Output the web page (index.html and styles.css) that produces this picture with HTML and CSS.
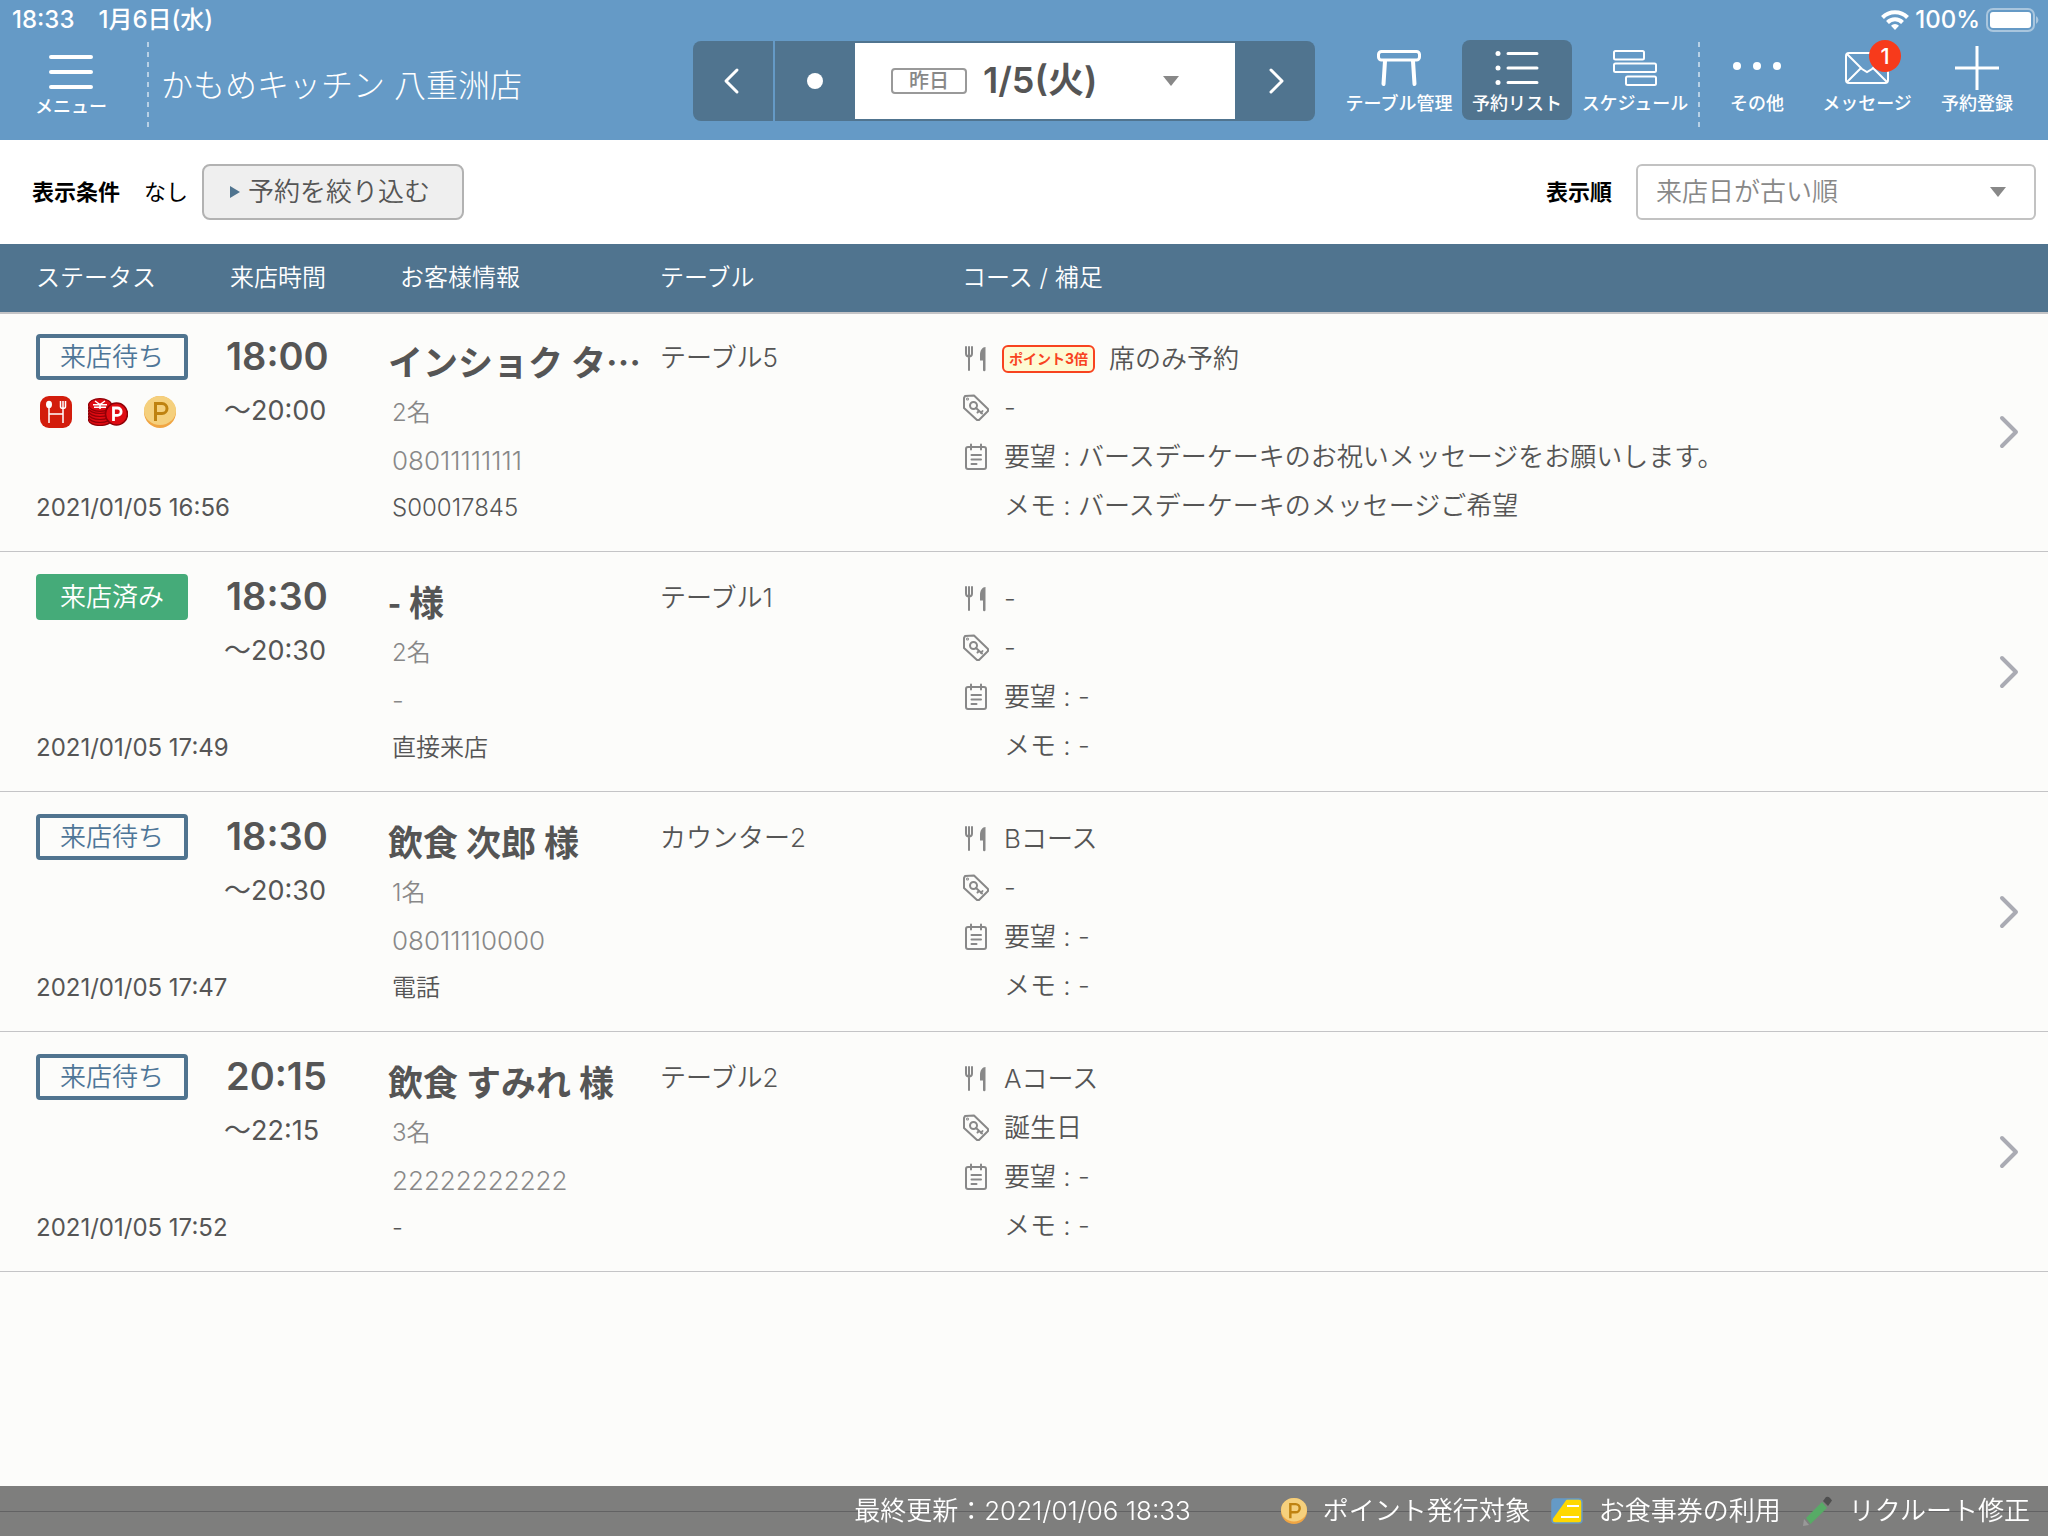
FILE: index.html
```html
<!DOCTYPE html>
<html lang="ja">
<head>
<meta charset="utf-8">
<meta name="viewport" content="width=device-width, initial-scale=1">
<title>予約リスト</title>
<link rel="stylesheet" href="styles.css">
</head>
<body>
<svg class="sprite" aria-hidden="true">
  <symbol id="fork" viewBox="0 0 24 26">
    <path d="M2 1v6.500a3 3 0 0 0 6 0V1M5 1v23" fill="none" stroke="#888" stroke-width="2" stroke-linecap="round"/>
    <path d="M21.500 1v23a1 1 0 0 1-2.500 0v-9.500h-3V9c0-5 2.500-8 5.500-8z" fill="#888"/>
  </symbol>
  <symbol id="tag" viewBox="0 0 28 28" fill="none" stroke="#888" stroke-width="2" stroke-linejoin="round" stroke-linecap="round">
    <path d="M2 4l1-2 9-.5L26 15v2l-9 9h-2L2 14z"/>
    <circle cx="11.500" cy="11.500" r="3.500"/>
    <path d="M14 14l6 5.500M17 17l-1.500 1.500M19 19l1.500-2"/>
    <circle cx="5.500" cy="5" r=".5"/>
  </symbol>
  <symbol id="note" viewBox="0 0 24 28" fill="none" stroke="#888" stroke-width="2" stroke-linecap="round">
    <rect x="2" y="4" width="20" height="22" rx="2"/>
    <path d="M7 1.500v5M17 1.500v5M7.500 12h9.500M7.500 16.500h9.500M7.500 21h5"/>
  </symbol>
  <symbol id="coin" viewBox="0 0 32 32">
    <circle cx="16" cy="16" r="16" fill="#f0a543"/>
    <ellipse cx="16" cy="14.500" rx="16" ry="14.500" fill="#f5d07d"/>
    <path d="M11.500 25V7.500h6.500a5 5 0 0 1 0 10h-6.500" fill="none" stroke="#bf8210" stroke-width="3"/>
  </symbol>
  <symbol id="next" viewBox="0 0 20 34">
    <path d="M3 3l14 14L3 31" fill="none" stroke="#aaabb3" stroke-width="4" stroke-linecap="round" stroke-linejoin="round"/>
  </symbol>
</svg>

<header class="header">
  <div class="statusbar">
    <div class="statusbar-group"><span class="clock">18:33</span><span>1月6日(水)</span></div>
    <div class="statusbar-group statusbar-right">
      <svg width="28" height="20" viewBox="0 0 28 20" fill="none" stroke="#fff" stroke-width="4"><path d="M1.500 7.500a17.500 17.500 0 0 1 25 0M6.500 12.500a10.500 10.500 0 0 1 15 0"/><path d="M14 20l-4-4.200a5.500 5.500 0 0 1 8 0z" fill="#fff" stroke="none"/></svg>
      <span class="percent">100%</span>
      <svg width="54" height="24" viewBox="0 0 54 24"><rect x="1" y="1" width="47" height="22" rx="6" fill="none" stroke="#a9c6de" stroke-width="2"/><rect x="4" y="4" width="41" height="16" rx="3" fill="#fff"/><path d="M50 8a4.500 4.500 0 0 1 0 8z" fill="#a9c6de"/></svg>
    </div>
  </div>
  <div class="toolbar">
    <div class="brand">
      <button class="tool menu" type="button">
        <svg width="44" height="36" viewBox="0 0 44 36" stroke="#fff" stroke-width="4" stroke-linecap="round"><path d="M2 3h40M2 18h40M2 33h40"/></svg>
        <span>メニュー</span>
      </button>
      <span class="dots"></span>
      <h1 class="shop">かもめキッチン 八重洲店</h1>
    </div>
    <div class="datenav">
      <button class="datenav-btn" type="button" aria-label="前の日"><svg width="20" height="28" viewBox="0 0 20 28" fill="none" stroke="#fff" stroke-width="3" stroke-linecap="round" stroke-linejoin="round"><path d="M14 3L3 14l11 11"/></svg></button>
      <button class="datenav-btn" type="button" aria-label="今日"><span class="today-dot"></span></button>
      <button class="date" type="button"><span class="date-tag">昨日</span><span class="date-text">1/5(火)</span><span class="caret"></span></button>
      <button class="datenav-btn" type="button" aria-label="次の日"><svg width="20" height="28" viewBox="0 0 20 28" fill="none" stroke="#fff" stroke-width="3" stroke-linecap="round" stroke-linejoin="round"><path d="M6 3l11 11L6 25"/></svg></button>
    </div>
    <nav class="tools">
      <button class="tool" type="button">
        <svg width="44" height="44" viewBox="0 0 44 44" fill="none" stroke="#fff" stroke-width="3" stroke-linecap="round"><rect x="1.500" y="5.500" width="41" height="8.500" rx="3"/><path d="M8 15L6.500 38M36 15l1.500 23" stroke-width="4"/></svg>
        <span>テーブル管理</span>
      </button>
      <button class="tool active" type="button">
        <svg width="44" height="44" viewBox="0 0 44 44" stroke="#fff" stroke-width="3" stroke-linecap="round"><path d="M13 7.500h29M13 22h29M13 36.500h29"/><g fill="#fff" stroke="none"><circle cx="3" cy="7.500" r="2.500"/><circle cx="3" cy="22" r="2.500"/><circle cx="3" cy="36.500" r="2.500"/></g></svg>
        <span>予約リスト</span>
      </button>
      <button class="tool" type="button">
        <svg width="44" height="44" viewBox="0 0 44 44" fill="none" stroke="#fff" stroke-width="2"><rect x="1" y="5" width="30" height="8.500" rx="1.500"/><rect x="1" y="17.500" width="42" height="8.500" rx="1.500"/><rect x="13" y="30.500" width="30" height="8.500" rx="1.500"/></svg>
        <span>スケジュール</span>
      </button>
      <span class="dots"></span>
      <button class="tool plain" type="button">
        <svg width="50" height="44" viewBox="0 0 50 44" fill="#fff"><circle cx="5" cy="20" r="4"/><circle cx="25" cy="20" r="4"/><circle cx="45" cy="20" r="4"/></svg>
        <span>その他</span>
      </button>
      <button class="tool plain" type="button">
        <svg width="44" height="44" viewBox="0 0 44 44" fill="none" stroke="#fff" stroke-width="2"><rect x="1" y="7" width="42" height="30" rx="3"/><path d="M2 8l15 15 5 3 5-3L42 8M2 36l14-14M42 36L28 22"/></svg>
        <span>メッセージ</span>
        <span class="count">1</span>
      </button>
      <button class="tool plain" type="button">
        <svg width="44" height="44" viewBox="0 0 44 44" stroke="#fff" stroke-width="3"><path d="M22 0v44M0 22h44"/></svg>
        <span>予約登録</span>
      </button>
    </nav>
  </div>
</header>

<section class="filters">
  <div class="filter-group">
    <strong>表示条件</strong>
    <span class="filter-value">なし</span>
    <button class="narrow" type="button"><span class="caret-right"></span>予約を絞り込む</button>
  </div>
  <div class="filter-group sort">
    <label for="sort">表示順</label>
    <span class="select-wrap">
      <select id="sort" class="select"><option>来店日が古い順</option></select>
      <span class="caret"></span>
    </span>
  </div>
</section>

<main class="content">
<table class="list">
  <colgroup><col class="c-status"><col class="c-time"><col class="c-guest"><col class="c-table"><col><col class="c-next"></colgroup>
  <thead>
    <tr><th>ステータス</th><th>来店時間</th><th>お客様情報</th><th>テーブル</th><th>コース / 補足</th><th></th></tr>
  </thead>
  <tbody>
    <tr>
      <td><div class="status">
        <span class="badge">来店待ち</span>
        <span class="marks">
          <svg width="32" height="32" viewBox="0 0 32 32"><rect width="32" height="32" rx="9" fill="#d31d0c"/><g fill="none" stroke="#fff" stroke-width="1.500"><path d="M9 12v15M23 11v16M9 18h14M20.500 5v5.500q0 2 2.500 2t2.500-2V5M23 5v6"/></g><ellipse cx="9" cy="8.500" rx="3" ry="3.700" fill="#fff"/></svg>
          <svg width="40" height="28" viewBox="0 0 40 28" stroke="#8f0007" stroke-width="1.200" fill="#de0b12"><ellipse cx="12" cy="22" rx="11.500" ry="5.500"/><ellipse cx="12" cy="19" rx="11.500" ry="5.500"/><ellipse cx="12" cy="16" rx="11.500" ry="5.500"/><ellipse cx="12" cy="13" rx="11.500" ry="5.500"/><ellipse cx="12" cy="10" rx="11.500" ry="5.500"/><ellipse cx="12" cy="7" rx="11.500" ry="6.400"/><path d="M7 3l5 3.500L17 3M12 6.500V11M5 6.800h14M6 9.200h12" stroke="#fff" stroke-width="1.500" fill="none"/><circle cx="28.500" cy="16" r="11" stroke-width="1.500"/><path d="M25.500 23V10h4a3.600 3.600 0 0 1 0 7.300h-4" fill="none" stroke="#fff" stroke-width="2.800"/></svg>
          <svg width="32" height="32"><use href="#coin"/></svg>
        </span>
        <span class="created">2021/01/05 16:56</span>
      </div></td>
      <td><div class="time">18:00</div><div class="until">〜20:00</div></td>
      <td><div class="name">インショク タ…</div><div class="people">2名</div><div class="phone">08011111111</div><div class="source">S00017845</div></td>
      <td><div class="seat">テーブル5</div></td>
      <td>
        <div class="line"><svg class="ico" width="24" height="26"><use href="#fork"/></svg><span class="point">ポイント3倍</span>席のみ予約</div>
        <div class="line"><svg class="ico" width="28" height="28"><use href="#tag"/></svg>-</div>
        <div class="line"><svg class="ico" width="24" height="28"><use href="#note"/></svg>要望 : バースデーケーキのお祝いメッセージをお願いします。</div>
        <div class="line memo">メモ : バースデーケーキのメッセージご希望</div>
      </td>
      <td class="go"><a href="#detail-1" aria-label="詳細"><svg width="20" height="34"><use href="#next"/></svg></a></td>
    </tr>
    <tr>
      <td><div class="status"><span class="badge done">来店済み</span><span class="created">2021/01/05 17:49</span></div></td>
      <td><div class="time">18:30</div><div class="until">〜20:30</div></td>
      <td><div class="name">- 様</div><div class="people">2名</div><div class="phone">-</div><div class="source">直接来店</div></td>
      <td><div class="seat">テーブル1</div></td>
      <td>
        <div class="line"><svg class="ico" width="24" height="26"><use href="#fork"/></svg>-</div>
        <div class="line"><svg class="ico" width="28" height="28"><use href="#tag"/></svg>-</div>
        <div class="line"><svg class="ico" width="24" height="28"><use href="#note"/></svg>要望 : -</div>
        <div class="line memo">メモ : -</div>
      </td>
      <td class="go"><a href="#detail-2" aria-label="詳細"><svg width="20" height="34"><use href="#next"/></svg></a></td>
    </tr>
    <tr>
      <td><div class="status"><span class="badge">来店待ち</span><span class="created">2021/01/05 17:47</span></div></td>
      <td><div class="time">18:30</div><div class="until">〜20:30</div></td>
      <td><div class="name">飲食 次郎 様</div><div class="people">1名</div><div class="phone">08011110000</div><div class="source">電話</div></td>
      <td><div class="seat">カウンター2</div></td>
      <td>
        <div class="line"><svg class="ico" width="24" height="26"><use href="#fork"/></svg>Bコース</div>
        <div class="line"><svg class="ico" width="28" height="28"><use href="#tag"/></svg>-</div>
        <div class="line"><svg class="ico" width="24" height="28"><use href="#note"/></svg>要望 : -</div>
        <div class="line memo">メモ : -</div>
      </td>
      <td class="go"><a href="#detail-3" aria-label="詳細"><svg width="20" height="34"><use href="#next"/></svg></a></td>
    </tr>
    <tr>
      <td><div class="status"><span class="badge">来店待ち</span><span class="created">2021/01/05 17:52</span></div></td>
      <td><div class="time">20:15</div><div class="until">〜22:15</div></td>
      <td><div class="name">飲食 すみれ 様</div><div class="people">3名</div><div class="phone">22222222222</div><div class="source">-</div></td>
      <td><div class="seat">テーブル2</div></td>
      <td>
        <div class="line"><svg class="ico" width="24" height="26"><use href="#fork"/></svg>Aコース</div>
        <div class="line"><svg class="ico" width="28" height="28"><use href="#tag"/></svg>誕生日</div>
        <div class="line"><svg class="ico" width="24" height="28"><use href="#note"/></svg>要望 : -</div>
        <div class="line memo">メモ : -</div>
      </td>
      <td class="go"><a href="#detail-4" aria-label="詳細"><svg width="20" height="34"><use href="#next"/></svg></a></td>
    </tr>
    <tr class="blank"><td colspan="6"></td></tr>
  </tbody>
</table>
</main>

<footer class="footer">
  <span class="updated">最終更新：2021/01/06 18:33</span>
  <span class="legend"><svg width="26" height="26"><use href="#coin"/></svg>ポイント発行対象</span>
  <span class="legend"><svg width="32" height="26" viewBox="0 0 32 26"><rect x="1" y="1" width="30" height="24" rx="3" fill="#ffd800" stroke="#659ac6" stroke-width="1.500"/><path d="M1 22V4q0-3 3-3h12z" fill="#659ac6"/><path d="M16 8h12M10 19h18" stroke="#fff" stroke-width="2"/></svg>お食事券の利用</span>
  <span class="legend"><svg width="32" height="32" viewBox="0 0 32 32"><path d="M5 23L21 7l5 6L9.500 29z" fill="#57ab66"/><path d="M22 6l3-4q2-1 4 1l2 2.500-4 5.500z" fill="#4f4f4f"/><path d="M2 31l1-7 5 6z" fill="#999"/></svg>リクルート修正</span>
</footer>
</body>
</html>
```
FILE: styles.css
```css
* {
  box-sizing: border-box;
}

body {
  margin: 0;
  min-height: 100vh;
  background: #fcfcfa;
  color: #555;
  font-family: "Inter", "Noto Sans CJK JP", sans-serif;
  font-size: 26px;
  font-weight: 350;
  line-height: 1.2;
}

button,
select {
  margin: 0;
  padding: 0;
  border: 0;
  background: none;
  color: inherit;
  font: inherit;
}

svg {
  display: block;
  flex: none;
}

.sprite {
  position: absolute;
  width: 0;
  height: 0;
}

/* Header */
.header {
  height: 140px;
  background: #659ac6;
  color: #fff;
}

.statusbar {
  display: flex;
  justify-content: space-between;
  height: 40px;
  padding: 0 8px 0 12px;
  font-size: 24px;
  font-weight: 500;
}

.statusbar-group {
  display: flex;
  align-items: center;
  gap: 24px;
}

.statusbar-right {
  gap: 6px;
}

.toolbar {
  display: flex;
  align-items: flex-start;
  padding-right: 16px;
}

.brand {
  display: flex;
  flex: 1;
  align-items: flex-start;
}

.tool {
  position: relative;
  display: flex;
  flex-direction: column;
  align-items: center;
  width: 110px;
  height: 80px;
  padding-top: 6px;
  border-radius: 8px;
  font-size: 18px;
  font-weight: 500;
  line-height: 28px;
  white-space: nowrap;
}

.active {
  background: #50748f;
}

.menu {
  width: 142px;
  height: 84px;
  padding-top: 14px;
  line-height: 34px;
}

.dots {
  width: 2px;
  height: 88px;
  margin: 2px 4px 0 5px;
  background: repeating-linear-gradient(#b8d1e6 0 5px, transparent 5px 10px);
}

.shop {
  margin: 0 0 0 8px;
  font-size: 32px;
  font-weight: 300;
  line-height: 92px;
  white-space: nowrap;
}

.datenav {
  display: flex;
  height: 80px;
  margin: 1px 29px 0 0;
  border-radius: 8px;
  background: #50748f;
  overflow: hidden;
}

.datenav-btn {
  display: flex;
  align-items: center;
  justify-content: center;
  width: 80px;
}

.datenav-btn:first-child {
  width: 82px;
  border-right: 2px solid #659ac6;
}

.today-dot {
  width: 16px;
  height: 16px;
  border-radius: 50%;
  background: #fff;
}

.date {
  display: flex;
  align-items: center;
  width: 380px;
  margin: 2px 0;
  padding: 0 56px 0 36px;
  background: #fff;
  color: #555;
}

.date-tag {
  width: 76px;
  border: 2px solid #999;
  border-radius: 4px;
  color: #888;
  font-size: 20px;
  font-weight: 500;
  line-height: 22px;
}

.date-text {
  margin-left: 16px;
  font-size: 36px;
  font-weight: 600;
}

.caret {
  width: 0;
  margin-left: auto;
  border: 8px solid transparent;
  border-top: 10px solid #888;
  border-bottom: 0;
}

.tools {
  display: flex;
}

.tools .tool + .tool:not(.plain) {
  margin-left: 8px;
}

.tools .dots {
  margin: 2px 2px 0 8px;
}

.count {
  position: absolute;
  top: 0;
  left: 57px;
  width: 32px;
  height: 32px;
  border-radius: 50%;
  background: #f73a1b;
  font-size: 22px;
  font-weight: 500;
  line-height: 32px;
}

/* Filter bar */
.filters {
  display: flex;
  align-items: center;
  justify-content: space-between;
  height: 104px;
  padding: 0 12px 0 32px;
  background: #fff;
  color: #000;
  font-size: 22px;
}

.filter-group {
  display: flex;
  align-items: center;
  white-space: nowrap;
}

.filter-group strong,
.filter-group label {
  font-weight: 700;
}

.filter-value {
  margin: 0 14px 0 24px;
  font-weight: 400;
}

.narrow {
  display: flex;
  align-items: center;
  gap: 8px;
  width: 262px;
  height: 56px;
  padding-left: 26px;
  border: 2px solid #b2b2b2;
  border-radius: 8px;
  background: #efefef;
  color: #555;
  font-size: 26px;
}

.caret-right {
  border: 6px solid transparent;
  border-left: 10px solid #50748f;
  border-right: 0;
}

.sort {
  gap: 24px;
}

.select-wrap {
  display: grid;
  align-items: center;
  width: 400px;
}

.select-wrap > * {
  grid-area: 1 / 1;
}

.select-wrap .caret {
  margin-right: 30px;
  pointer-events: none;
}

.select {
  width: 100%;
  height: 56px;
  padding-left: 18px;
  border: 2px solid #c2c2c2;
  border-radius: 6px;
  color: #888;
  font-size: 26px;
  appearance: none;
}

/* Reservation list */
.list {
  width: 100%;
  border-spacing: 0;
  table-layout: fixed;
}

.c-status {
  width: 224px;
}

.c-time {
  width: 164px;
}

.c-guest {
  width: 272px;
}

.c-table {
  width: 302px;
}

.c-next {
  width: 60px;
}

.list thead tr {
  background: #50748f;
  box-shadow: 0 2px 0 #c4c4c6;
}

.list th {
  height: 68px;
  padding: 0;
  color: #fff;
  font-size: 24px;
  font-weight: 350;
  text-align: left;
}

.list th:first-child {
  padding-left: 36px;
}

.list th:nth-child(2) {
  padding-left: 6px;
}

.list th:nth-child(3) {
  padding-left: 12px;
}

.list td {
  height: 240px;
  padding: 22px 0 16px;
  border-bottom: 1px solid #c4c4c6;
  vertical-align: top;
  white-space: nowrap;
}

.list td:first-child {
  padding-left: 36px;
}

.list .blank td {
  padding: 0;
}

.status {
  display: flex;
  flex-direction: column;
  height: 198px;
}

.badge {
  width: 152px;
  height: 46px;
  border: 4px solid #50748f;
  border-radius: 4px;
  color: #4f7698;
  line-height: 38px;
  text-align: center;
}

.done {
  border-color: #45ab79;
  background: #45ab79;
  color: #fff;
}

.marks {
  display: flex;
  align-items: center;
  gap: 16px;
  height: 64px;
  padding-left: 4px;
}

.created {
  margin-top: auto;
  font-size: 24px;
  font-weight: 400;
  line-height: 48px;
}

.time {
  padding-left: 2px;
  font-size: 38px;
  font-weight: 600;
  line-height: 44px;
}

.until {
  font-size: 27px;
  font-weight: 400;
  line-height: 66px;
}

.name {
  width: 260px;
  font-family: "Noto Sans CJK JP", sans-serif;
  font-size: 35px;
  font-weight: 700;
  line-height: 54px;
}

.people,
.phone,
.source {
  padding-left: 4px;
  font-size: 24px;
}

.people {
  color: #888;
  line-height: 50px;
}

.phone {
  color: #888;
  font-size: 26px;
  line-height: 46px;
}

.source {
  line-height: 48px;
}

.seat {
  line-height: 48px;
}

.line {
  display: flex;
  align-items: center;
  height: 49px;
}

.ico {
  width: 28px;
  margin-right: 14px;
}

.memo {
  padding-left: 42px;
}

.point {
  margin: 0 14px 0 -2px;
  padding: 0 5px;
  border: 2px solid #f8431f;
  border-radius: 6px;
  background: #fdfbd3;
  color: #f8431f;
  font-size: 14px;
  font-weight: 700;
  line-height: 24px;
}

.list .go {
  padding: 0;
  vertical-align: middle;
}

.go a {
  display: block;
  padding-left: 11px;
}

/* Footer */
.footer {
  position: fixed;
  right: 0;
  bottom: 0;
  left: 0;
  display: flex;
  align-items: center;
  justify-content: flex-end;
  gap: 20px;
  height: 50px;
  padding-right: 18px;
  background: rgba(0, 0, 0, .5);
  color: #fff;
  white-space: nowrap;
}

.updated {
  margin-right: 70px;
}

.legend {
  display: flex;
  align-items: center;
  gap: 16px;
}
```
